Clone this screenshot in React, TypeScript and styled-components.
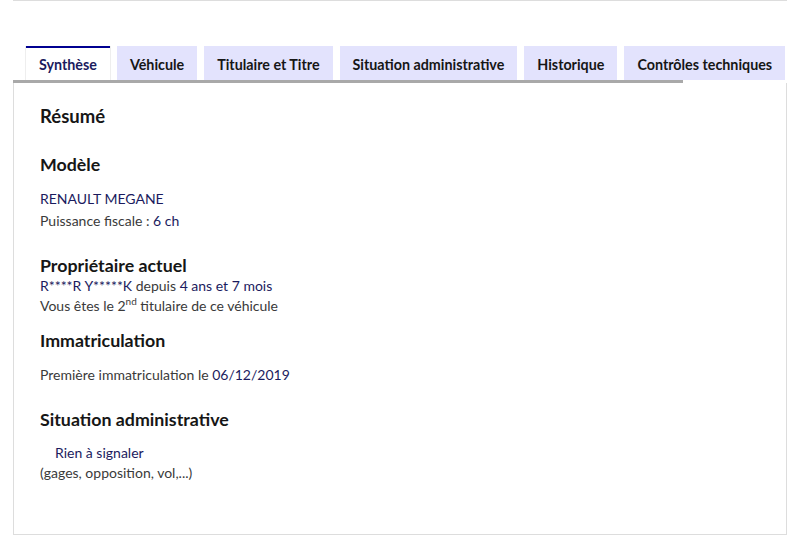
import styled, { createGlobalStyle } from 'styled-components';

const NAVY = '#1b1b5e';
const TEXT = '#3a3a3a';

const GlobalStyle = createGlobalStyle`
  body {
    margin: 0;
    background: #fff;
    font-family: Lato, "Noto Sans", sans-serif;
    color: ${TEXT};
  }
`;

interface TabProps {
  active?: boolean;
}

const tabs = [
  'Synthèse',
  'Véhicule',
  'Titulaire et Titre',
  'Situation administrative',
  'Historique',
  'Contrôles techniques',
];

export default function App() {
  return (
    <>
      <GlobalStyle />
      <Page>
        <TopRule />
        <TabsWrap>
          <TabList>
            {tabs.map((t, i) => (
              <Tab key={t} active={i === 0}>
                {t}
              </Tab>
            ))}
          </TabList>
          <ScrollThumb />
          <Panel>
            <Title>Résumé</Title>

            <Section gap={22}>
              <Heading>Modèle</Heading>
              <Lines spaced>
                <Value>RENAULT MEGANE</Value>
                <Line>
                  Puissance fiscale : <Value>6 ch</Value>
                </Line>
              </Lines>
            </Section>

            <Section gap={13}>
              <Heading>Propriétaire actuel</Heading>
              <Lines tight>
                <Line>
                  <Value>R****R Y*****K</Value> depuis <Value>4 ans et 7 mois</Value>
                </Line>
                <Line>
                  Vous êtes le 2<sup>nd</sup> titulaire de ce véhicule
                </Line>
              </Lines>
            </Section>

            <Section gap={22}>
              <Heading>Immatriculation</Heading>
              <Lines spaced>
                <Line>
                  Première immatriculation le <Value>06/12/2019</Value>
                </Line>
              </Lines>
            </Section>

            <Section gap={0}>
              <Heading>Situation administrative</Heading>
              <Lines spaced tight>
                <Indented>Rien à signaler</Indented>
                <Line>(gages, opposition, vol,...)</Line>
              </Lines>
            </Section>
          </Panel>
        </TabsWrap>
      </Page>
    </>
  );
}

const Page = styled.div`
  width: 774px;
  margin-left: 13px;
  height: 546px;
`;

const TopRule = styled.div`
  height: 1px;
  background: #dddddd;
`;

const TabsWrap = styled.div`
  margin-top: 45px;
`;

const TabList = styled.div`
  display: flex;
  gap: 7px;
  padding-left: 13px;
  height: 34px;
  white-space: nowrap;
`;

const Tab = styled.div<TabProps>`
  display: flex;
  align-items: center;
  padding: 0 13px;
  font-size: 14.3px;
  font-weight: 700;
  color: ${({ active }) => (active ? NAVY : '#161616')};
  background: ${({ active }) => (active ? '#ffffff' : '#e3e3fd')};
  border-top: 2px solid ${({ active }) => (active ? '#000091' : 'transparent')};
  box-sizing: border-box;
  box-shadow: ${({ active }) => (active ? '1px 0 0 #eee, -1px 0 0 #eee' : 'none')};
`;

const ScrollThumb = styled.div`
  width: 670px;
  height: 3px;
  background: #a9a9a9;
`;

const Panel = styled.div`
  border: 1px solid #dddddd;
  border-top: none;
  height: 452px;
  box-sizing: border-box;
  padding: 19px 26px 0;
`;

const Title = styled.h2`
  margin: 0 0 23px;
  font-size: 18.5px;
  font-weight: 700;
  color: #161616;
  line-height: 28px;
`;

const Section = styled.section<{ gap: number }>`
  margin-bottom: ${({ gap }) => gap}px;
`;

const Heading = styled.h3`
  margin: 0;
  font-size: 17.8px;
  font-weight: 700;
  color: #161616;
  line-height: 22px;
`;

const Lines = styled.div<{ spaced?: boolean; tight?: boolean }>`
  display: flex;
  flex-direction: column;
  margin-top: ${({ spaced }) => (spaced ? '13px' : '0')};
  font-size: 14px;
  line-height: ${({ tight }) => (tight ? '20px' : '22px')};

  sup {
    font-size: 10px;
    line-height: 0;
  }
`;

const Line = styled.div`
  color: ${TEXT};
`;

const Value = styled.span`
  color: ${NAVY};
`;

const Indented = styled.div`
  color: ${NAVY};
  padding-left: 15px;
`;
